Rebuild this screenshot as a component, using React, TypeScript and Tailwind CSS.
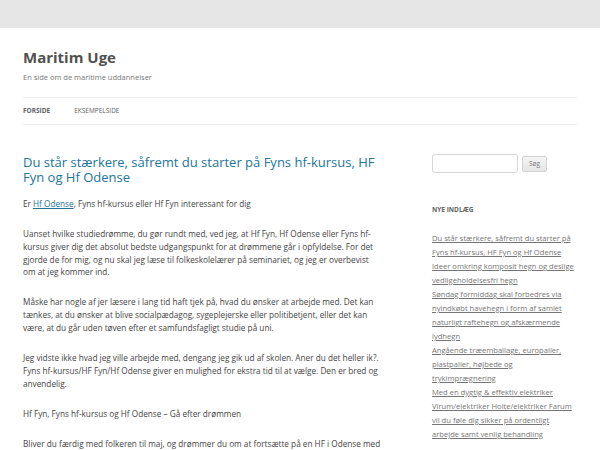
import React from 'react';

// Twenty Twelve–style blog front page: header, single post, sidebar with search + recent posts.

const recentPosts = [
  'Du står stærkere, såfremt du starter på Fyns hf-kursus, HF Fyn og Hf Odense',
  'Ideer omkring komposit hegn og deslige vedligeholdelsesfri hegn',
  'Søndag formiddag skal forbedres via nyindkøbt havehegn i form af samlet naturligt raftehegn og afskærmende lydhegn',
  'Angående træemballage, europaller, plastpaller, højbede og trykimprægnering',
  'Med en dygtig & effektiv elektriker Virum/elektriker Holte/elektriker Farum vil du føle dig sikker på ordentligt arbejde samt venlig behandling',
];

function Header() {
  return (
    <header>
      <h1 className="pt-[20px] text-[15px] leading-[18px] font-bold text-[#515151]">Maritim Uge</h1>
      <h2 className="mt-[6px] text-[7.5px] leading-[10px] text-[#757575]">En side om de maritime uddannelser</h2>
      <nav className="mt-[15px] h-[28px] border-y border-[#ededed] flex items-center gap-[24px] text-[6.5px] uppercase text-[#5e5e5e]">
        <span className="font-bold text-[#636363]">Forside</span>
        <span>Eksempelside</span>
      </nav>
    </header>
  );
}

function Post() {
  return (
    <article className="w-[360px] pt-[1px]">
      <h1 className="text-[13px] leading-[14.5px] text-[#21759b]">
        Du står stærkere, såfremt du starter på Fyns hf-kursus, HF Fyn og Hf Odense
      </h1>
      <div className="mt-[14px] text-[8.22px] leading-[12.8px] text-[#444] flex flex-col gap-[17.2px]">
        <p>
          Er <span className="underline text-[#21759b]">Hf Odense</span>, Fyns hf-kursus eller Hf Fyn interessant for dig
        </p>
        <p>
          Uanset hvilke studiedrømme, du gør rundt med, ved jeg, at Hf Fyn, Hf Odense eller Fyns hf-kursus giver dig det absolut bedste udgangspunkt for at drømmene går i opfyldelse. For det gjorde de for mig, og nu skal jeg læse til folkeskolelærer på seminariet, og jeg er overbevist om at jeg kommer ind.
        </p>
        <p>
          Måske har nogle af jer læsere i lang tid haft tjek på, hvad du ønsker at arbejde med. Det kan tænkes, at du ønsker at blive socialpædagog, sygeplejerske eller politibetjent, eller det kan være, at du går uden tøven efter et samfundsfagligt studie på uni.
        </p>
        <p>
          Jeg vidste ikke hvad jeg ville arbejde med, dengang jeg gik ud af skolen. Aner du det heller ik?. Fyns hf-kursus/HF Fyn/Hf Odense giver en mulighed for ekstra tid til at vælge. Den er bred og anvendelig.
        </p>
        <p>Hf Fyn, Fyns hf-kursus og Hf Odense – Gå efter drømmen</p>
        <p>
          Bliver du færdig med folkeren til maj, og drømmer du om at fortsætte på en HF i Odense med et godt fællesskab og dygtige lærere, så er Hf Fyn et godt sted at starte.
        </p>
      </div>
    </article>
  );
}

function Sidebar() {
  return (
    <aside className="w-[145px]">
      <form className="flex items-center gap-[4px]" onSubmit={(e) => e.preventDefault()}>
        <input
          type="text"
          className="w-[86px] h-[19px] border border-[#d6d6d6] rounded-[3px] bg-white"
        />
        <button
          type="submit"
          className="w-[25px] h-[16px] border border-[#d2d2d2] rounded-[2px] bg-gradient-to-b from-[#f4f4f4] to-[#e6e6e6] text-[6.5px] text-[#7c7c7c]"
        >
          Søg
        </button>
      </form>
      <h3 className="mt-[32px] text-[6.5px] leading-[10px] font-bold uppercase text-[#636363]">Nye indlæg</h3>
      <ul className="mt-[16px] text-[7.6px] leading-[14px] text-[#757575]">
        {recentPosts.map((t) => (
          <li key={t}>
            <span className="underline">{t}</span>
          </li>
        ))}
      </ul>
    </aside>
  );
}

export default function App() {
  return (
    <div
      className="h-[450px] overflow-hidden bg-[#e6e6e6] pt-[28px]"
      style={{ fontFamily: '"Open Sans", "Liberation Sans", sans-serif' }}
    >
      <div className="bg-white px-[23px] h-full">
        <Header />
        <div className="mt-[29px] flex justify-between">
          <Post />
          <Sidebar />
        </div>
      </div>
    </div>
  );
}
